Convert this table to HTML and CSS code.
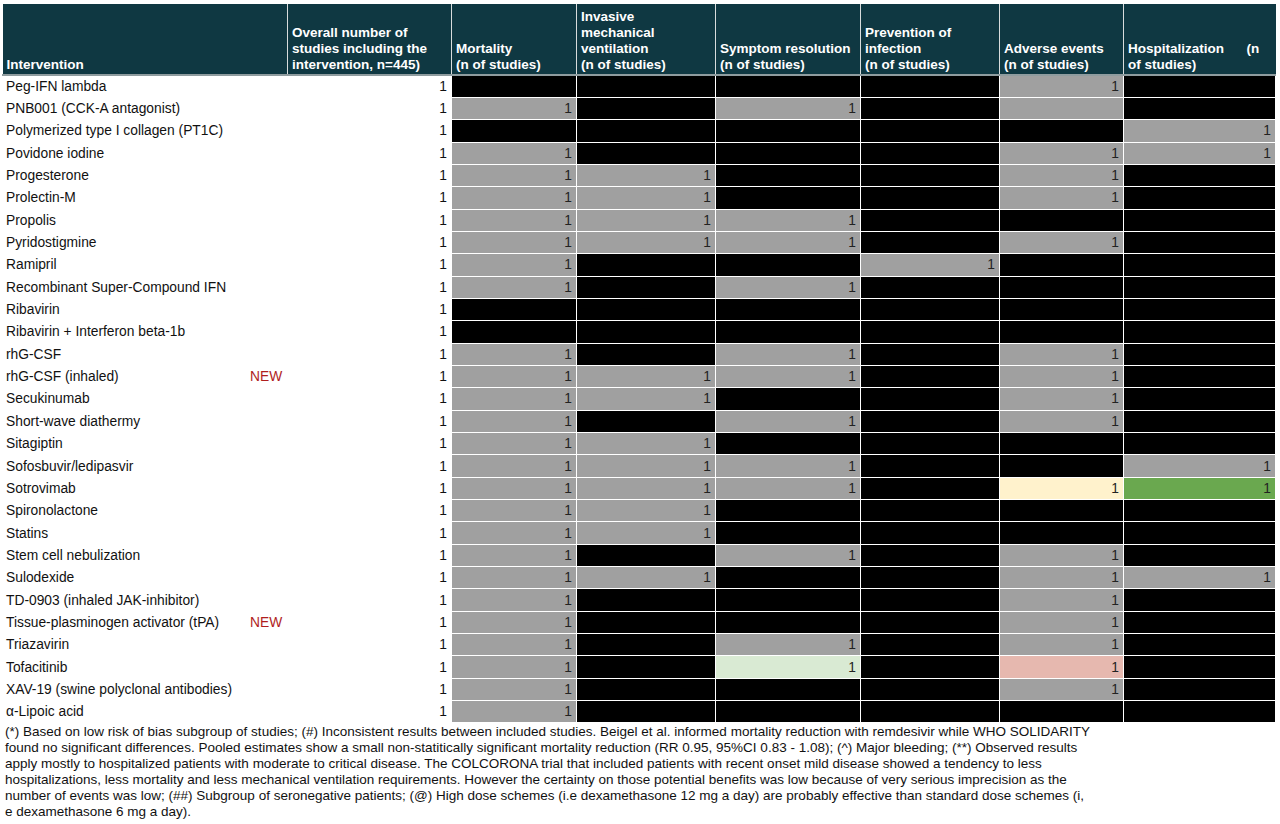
FILE: index.html
```html
<!DOCTYPE html>
<html lang="en">
<head>
<meta charset="utf-8">
<title>Interventions</title>
<link rel="stylesheet" href="styles.css">
</head>
<body>
<div class="page">
<table class="grid">
<colgroup>
<col class="c-name"><col class="c-new"><col class="c-count">
<col class="c-mort"><col class="c-imv"><col class="c-sym"><col class="c-prev"><col class="c-ae"><col class="c-hosp">
</colgroup>
<thead>
<tr>
<th colspan="2">Intervention</th>
<th>Overall number of<br>studies including the<br>intervention, n=445)</th>
<th>Mortality<br>(n of studies)</th>
<th>Invasive<br>mechanical<br>ventilation<br>(n of studies)</th>
<th>Symptom resolution<br>(n of studies)</th>
<th>Prevention of<br>infection<br>(n of studies)</th>
<th>Adverse events<br>(n of studies)</th>
<th>Hospitalization&nbsp;&nbsp;&nbsp;&nbsp;&nbsp;&nbsp;(n<br>of studies)</th>
</tr>
</thead>
<tbody>
<tr><td class="nm">Peg-IFN lambda</td><td class="nw"></td><td class="ct">1</td><td class="b"></td><td class="b"></td><td class="b"></td><td class="b"></td><td class="g">1</td><td class="b"></td></tr>
<tr><td class="nm">PNB001 (CCK-A antagonist)</td><td class="nw"></td><td class="ct">1</td><td class="g">1</td><td class="b"></td><td class="g">1</td><td class="b"></td><td class="g"></td><td class="b"></td></tr>
<tr><td class="nm">Polymerized type I collagen (PT1C)</td><td class="nw"></td><td class="ct">1</td><td class="b"></td><td class="b"></td><td class="b"></td><td class="b"></td><td class="b"></td><td class="g">1</td></tr>
<tr><td class="nm">Povidone iodine</td><td class="nw"></td><td class="ct">1</td><td class="g">1</td><td class="b"></td><td class="b"></td><td class="b"></td><td class="g">1</td><td class="g">1</td></tr>
<tr><td class="nm">Progesterone</td><td class="nw"></td><td class="ct">1</td><td class="g">1</td><td class="g">1</td><td class="b"></td><td class="b"></td><td class="g">1</td><td class="b"></td></tr>
<tr><td class="nm">Prolectin-M</td><td class="nw"></td><td class="ct">1</td><td class="g">1</td><td class="g">1</td><td class="b"></td><td class="b"></td><td class="g">1</td><td class="b"></td></tr>
<tr><td class="nm">Propolis</td><td class="nw"></td><td class="ct">1</td><td class="g">1</td><td class="g">1</td><td class="g">1</td><td class="b"></td><td class="b"></td><td class="b"></td></tr>
<tr><td class="nm">Pyridostigmine</td><td class="nw"></td><td class="ct">1</td><td class="g">1</td><td class="g">1</td><td class="g">1</td><td class="b"></td><td class="g">1</td><td class="b"></td></tr>
<tr><td class="nm">Ramipril</td><td class="nw"></td><td class="ct">1</td><td class="g">1</td><td class="b"></td><td class="b"></td><td class="g">1</td><td class="b"></td><td class="b"></td></tr>
<tr><td class="nm">Recombinant Super-Compound IFN</td><td class="nw"></td><td class="ct">1</td><td class="g">1</td><td class="b"></td><td class="g">1</td><td class="b"></td><td class="b"></td><td class="b"></td></tr>
<tr><td class="nm">Ribavirin</td><td class="nw"></td><td class="ct">1</td><td class="b"></td><td class="b"></td><td class="b"></td><td class="b"></td><td class="b"></td><td class="b"></td></tr>
<tr><td class="nm">Ribavirin + Interferon beta-1b</td><td class="nw"></td><td class="ct">1</td><td class="b"></td><td class="b"></td><td class="b"></td><td class="b"></td><td class="b"></td><td class="b"></td></tr>
<tr><td class="nm">rhG-CSF</td><td class="nw"></td><td class="ct">1</td><td class="g">1</td><td class="b"></td><td class="g">1</td><td class="b"></td><td class="g">1</td><td class="b"></td></tr>
<tr><td class="nm">rhG-CSF (inhaled)</td><td class="nw">NEW</td><td class="ct">1</td><td class="g">1</td><td class="g">1</td><td class="g">1</td><td class="b"></td><td class="g">1</td><td class="b"></td></tr>
<tr><td class="nm">Secukinumab</td><td class="nw"></td><td class="ct">1</td><td class="g">1</td><td class="g">1</td><td class="b"></td><td class="b"></td><td class="g">1</td><td class="b"></td></tr>
<tr><td class="nm">Short-wave diathermy</td><td class="nw"></td><td class="ct">1</td><td class="g">1</td><td class="b"></td><td class="g">1</td><td class="b"></td><td class="g">1</td><td class="b"></td></tr>
<tr><td class="nm">Sitagiptin</td><td class="nw"></td><td class="ct">1</td><td class="g">1</td><td class="g">1</td><td class="b"></td><td class="b"></td><td class="b"></td><td class="b"></td></tr>
<tr><td class="nm">Sofosbuvir/ledipasvir</td><td class="nw"></td><td class="ct">1</td><td class="g">1</td><td class="g">1</td><td class="g">1</td><td class="b"></td><td class="b"></td><td class="g">1</td></tr>
<tr><td class="nm">Sotrovimab</td><td class="nw"></td><td class="ct">1</td><td class="g">1</td><td class="g">1</td><td class="g">1</td><td class="b"></td><td class="y">1</td><td class="gr">1</td></tr>
<tr><td class="nm">Spironolactone</td><td class="nw"></td><td class="ct">1</td><td class="g">1</td><td class="g">1</td><td class="b"></td><td class="b"></td><td class="b"></td><td class="b"></td></tr>
<tr><td class="nm">Statins</td><td class="nw"></td><td class="ct">1</td><td class="g">1</td><td class="g">1</td><td class="b"></td><td class="b"></td><td class="b"></td><td class="b"></td></tr>
<tr><td class="nm">Stem cell nebulization</td><td class="nw"></td><td class="ct">1</td><td class="g">1</td><td class="b"></td><td class="g">1</td><td class="b"></td><td class="g">1</td><td class="b"></td></tr>
<tr><td class="nm">Sulodexide</td><td class="nw"></td><td class="ct">1</td><td class="g">1</td><td class="g">1</td><td class="b"></td><td class="b"></td><td class="g">1</td><td class="g">1</td></tr>
<tr><td class="nm">TD-0903 (inhaled JAK-inhibitor)</td><td class="nw"></td><td class="ct">1</td><td class="g">1</td><td class="b"></td><td class="b"></td><td class="b"></td><td class="g">1</td><td class="b"></td></tr>
<tr><td class="nm">Tissue-plasminogen activator (tPA)</td><td class="nw">NEW</td><td class="ct">1</td><td class="g">1</td><td class="b"></td><td class="b"></td><td class="b"></td><td class="g">1</td><td class="b"></td></tr>
<tr><td class="nm">Triazavirin</td><td class="nw"></td><td class="ct">1</td><td class="g">1</td><td class="b"></td><td class="g">1</td><td class="b"></td><td class="g">1</td><td class="b"></td></tr>
<tr><td class="nm">Tofacitinib</td><td class="nw"></td><td class="ct">1</td><td class="g">1</td><td class="b"></td><td class="lg">1</td><td class="b"></td><td class="pk">1</td><td class="b"></td></tr>
<tr><td class="nm">XAV-19 (swine polyclonal antibodies)</td><td class="nw"></td><td class="ct">1</td><td class="g">1</td><td class="b"></td><td class="b"></td><td class="b"></td><td class="g">1</td><td class="b"></td></tr>
<tr><td class="nm">α-Lipoic acid</td><td class="nw"></td><td class="ct">1</td><td class="g">1</td><td class="b"></td><td class="b"></td><td class="b"></td><td class="b"></td><td class="b"></td></tr>
</tbody>
</table>
<p class="notes">(*) Based on low risk of bias subgroup of studies; (#) Inconsistent results between included studies. Beigel et al. informed mortality reduction with remdesivir while WHO SOLIDARITY<br>found no significant differences. Pooled estimates show a small non-statitically significant mortality reduction (RR 0.95, 95%CI 0.83 - 1.08); (^) Major bleeding; (**) Observed results<br>apply mostly to hospitalized patients with moderate to critical disease. The COLCORONA trial that included patients with recent onset mild disease showed a tendency to less<br>hospitalizations, less mortality and less mechanical ventilation requirements. However the certainty on those potential benefits was low because of very serious imprecision as the<br>number of events was low; (##) Subgroup of seronegative patients; (@) High dose schemes (i.e dexamethasone 12 mg a day) are probably effective than standard dose schemes (i,<br>e dexamethasone 6 mg a day).</p>
</div>
</body>
</html>
```
FILE: styles.css
```css
html, body {
  margin: 0;
  padding: 0;
  background: #ffffff;
}
body {
  font-family: "Liberation Sans", Arial, sans-serif;
  color: #111;
  width: 1280px;
  height: 824px;
  overflow: hidden;
}
.page {
  padding: 4px 0 0 2px;
}
.grid {
  border-collapse: collapse;
  table-layout: fixed;
  width: 1273px;
  font-size: 13.8px;
}
.c-name { width: 245px; }
.c-new { width: 40px; }
.c-count { width: 164px; }
.c-mort { width: 125px; }
.c-imv { width: 139px; }
.c-sym { width: 145px; }
.c-prev { width: 139px; }
.c-ae { width: 124px; }
.c-hosp { width: 152px; }

.grid th {
  background: #0f3842;
  color: #ffffff;
  font-weight: bold;
  font-size: 13.5px;
  line-height: 16px;
  text-align: left;
  vertical-align: bottom;
  padding: 0 3px 1px 4px;
  height: 71px;
  box-sizing: border-box;
  border-left: 1px solid #d8dcdc;
  border-bottom: 2px solid #8f9c9f;
  white-space: nowrap;
}
.grid th:first-child {
  border-left: none;
}
.grid tbody tr {
  height: 22.35px;
}
.grid td {
  padding: 0 4px;
  white-space: nowrap;
  overflow: hidden;
  border: 1px solid #ffffff;
  text-align: right;
  color: #222;
}
.grid td.nm {
  text-align: left;
  padding-left: 3px;
  color: #111;
}
.grid td.nw {
  text-align: left;
  padding-left: 2px;
  color: #b01e1e;
}
.grid td.ct {
  color: #111;
}
.b { background: #000000; }
.g { background: #a0a0a0; }
.y { background: #fff2cc; }
.gr { background: #6aa84f; }
.lg { background: #d9ead3; }
.pk { background: #e6b8af; }

.notes {
  margin: 1px 0 0 3px;
  font-size: 13.5px;
  line-height: 16px;
  color: #111;
  white-space: nowrap;
}
```
